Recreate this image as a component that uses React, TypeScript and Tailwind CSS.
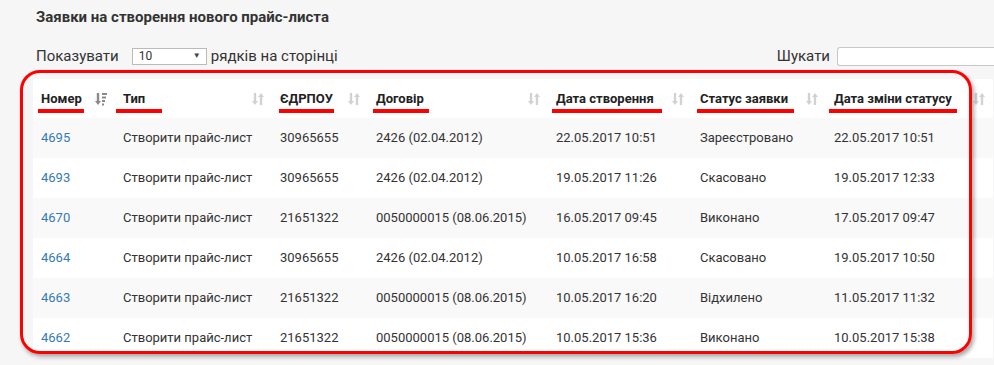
import React from 'react'

type Row = {
  id: string
  type: string
  edrpou: string
  contract: string
  created: string
  status: string
  changed: string
}

const rows: Row[] = [
  { id: '4695', type: 'Створити прайс-лист', edrpou: '30965655', contract: '2426 (02.04.2012)', created: '22.05.2017 10:51', status: 'Зареєстровано', changed: '22.05.2017 10:51' },
  { id: '4693', type: 'Створити прайс-лист', edrpou: '30965655', contract: '2426 (02.04.2012)', created: '19.05.2017 11:26', status: 'Скасовано', changed: '19.05.2017 12:33' },
  { id: '4670', type: 'Створити прайс-лист', edrpou: '21651322', contract: '0050000015 (08.06.2015)', created: '16.05.2017 09:45', status: 'Виконано', changed: '17.05.2017 09:47' },
  { id: '4664', type: 'Створити прайс-лист', edrpou: '30965655', contract: '2426 (02.04.2012)', created: '10.05.2017 16:58', status: 'Скасовано', changed: '19.05.2017 10:50' },
  { id: '4663', type: 'Створити прайс-лист', edrpou: '21651322', contract: '0050000015 (08.06.2015)', created: '10.05.2017 16:20', status: 'Відхилено', changed: '11.05.2017 11:32' },
  { id: '4662', type: 'Створити прайс-лист', edrpou: '21651322', contract: '0050000015 (08.06.2015)', created: '10.05.2017 15:36', status: 'Виконано', changed: '10.05.2017 15:38' },
]

// underline marks drawn over the header labels
const headers = [
  { label: 'Номер', width: 'w-[82px]', mark: 'left-[5px] w-[46px]', sorted: true },
  { label: 'Тип', width: 'w-[157px]', mark: 'left-[1px] w-[46px]', sorted: false },
  { label: 'ЄДРПОУ', width: 'w-[96px]', mark: 'left-[7px] w-[55px]', sorted: false },
  { label: 'Договір', width: 'w-[180px]', mark: 'left-[5px] w-[56px]', sorted: false },
  { label: 'Дата створення', width: 'w-[144px]', mark: 'left-[4px] w-[110px]', sorted: false },
  { label: 'Статус заявки', width: 'w-[134px]', mark: 'left-[5px] w-[97px]', sorted: false },
  { label: 'Дата зміни статусу', width: 'w-[167px]', mark: 'left-[3px] w-[128px]', sorted: false },
]

function SortIcon({ sorted }: { sorted: boolean }) {
  if (sorted) {
    return (
      <svg width="12" height="14" viewBox="0 0 12 14" className="text-[#8a8a8a]">
        <path d="M3 1v9" stroke="currentColor" strokeWidth="2.4" />
        <path d="M0 9h6l-3 4z" fill="currentColor" />
        <rect x="7" y="1" width="5" height="2" fill="currentColor" />
        <rect x="7" y="4.5" width="4" height="2" fill="currentColor" />
        <rect x="7" y="8" width="3" height="2" fill="currentColor" />
        <rect x="7" y="11.5" width="2" height="2" fill="currentColor" />
      </svg>
    )
  }
  return (
    <svg width="12" height="14" viewBox="0 0 12 14" className="text-[#d2d2d2]">
      <path d="M3 1v9" stroke="currentColor" strokeWidth="2.4" />
      <path d="M0 9h6l-3 4z" fill="currentColor" />
      <path d="M9 4v9" stroke="currentColor" strokeWidth="2.4" />
      <path d="M6 5h6l-3-4z" fill="currentColor" />
    </svg>
  )
}

export default function App() {
  return (
    <div className="w-[994px] h-[365px] overflow-hidden bg-[#f6f6f6] pl-[33px] font-['Roboto',sans-serif] text-[#333]">
      <h1 className="pl-[3px] pt-[7px] text-[15px] leading-5 font-bold text-[#333]">
        Заявки на створення нового прайс-листа
      </h1>

      <div className="flex items-center justify-between pl-[3px] mt-[18px] h-[22px]">
        <div className="flex items-center text-[15px]">
          <span>Показувати</span>
          <div className="ml-[13px] mr-[4px] flex h-[17px] w-[75px] items-center justify-between border border-[#bbb] bg-white pl-[6px] pr-[5px] text-[12px]">
            <span>10</span>
            <span className="text-[8px] text-[#444]">▼</span>
          </div>
          <span>рядків на сторінці</span>
        </div>
        <div className="flex items-center text-[15px]">
          <span>Шукати</span>
          <div className="ml-[7px] h-[19px] w-[157px] rounded-l-[3px] border border-r-0 border-[#c8c8c8] bg-white" />
        </div>
      </div>

      <div className="relative mt-[12px]">
        <table className="table-fixed border-collapse bg-white text-[13px]">
          <thead>
            <tr className="h-[39px] bg-white">
              {headers.map(h => (
                <th key={h.label} className={`${h.width} relative px-2 text-left font-bold text-[#222]`}>
                  <div className="flex items-center justify-between">
                    <span>{h.label}</span>
                    <SortIcon sorted={h.sorted} />
                  </div>
                  <span className={`absolute top-[30px] h-[4px] bg-[#f00] ${h.mark}`} />
                </th>
              ))}
            </tr>
          </thead>
          <tbody>
            {rows.map((r, i) => (
              <tr key={r.id} className={`h-[40px] ${i % 2 === 0 ? 'bg-[#f9f9f9]' : 'bg-white'}`}>
                <td className="px-2 text-[#337ab7]">{r.id}</td>
                <td className="px-2">{r.type}</td>
                <td className="px-2">{r.edrpou}</td>
                <td className="px-2">{r.contract}</td>
                <td className="px-2">{r.created}</td>
                <td className="px-2">{r.status}</td>
                <td className="px-2">{r.changed}</td>
              </tr>
            ))}
          </tbody>
        </table>

        <div className="pointer-events-none absolute left-[-13px] top-[-9px] h-[284px] w-[952px] rounded-[20px] border-[3px] border-[#f00] shadow-[2px_3px_4px_rgba(0,0,0,0.35)]" />
      </div>
    </div>
  )
}
